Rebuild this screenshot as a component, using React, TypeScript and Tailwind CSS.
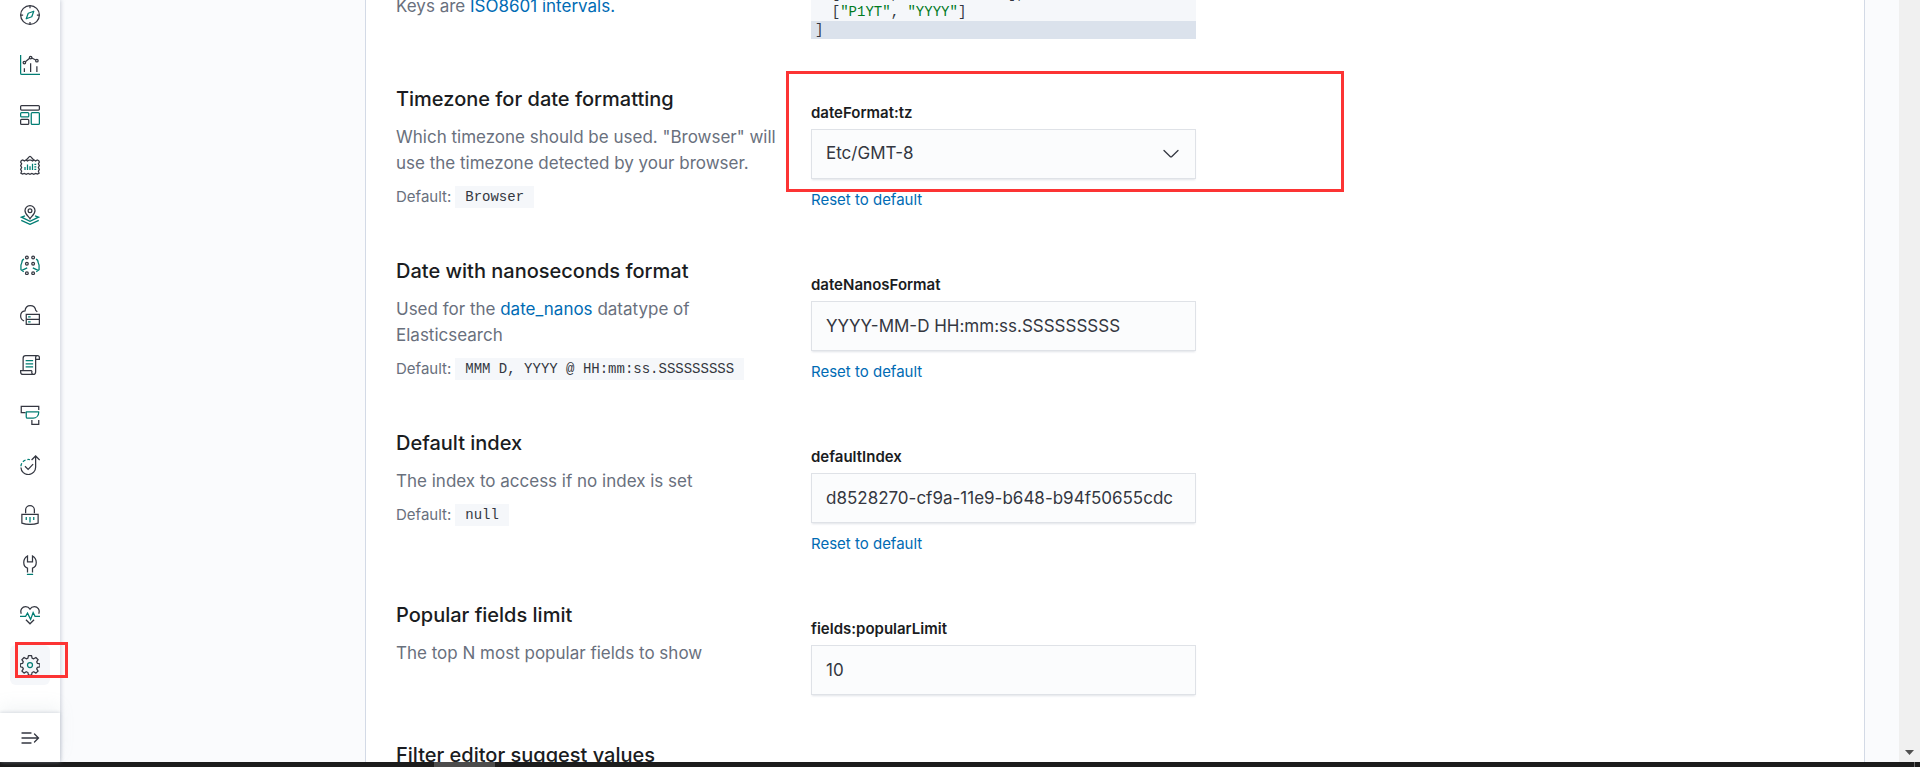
import type { ReactNode } from "react";

const DARK = "#343741";
const TEAL = "#017d73";

function Icon({ children }: { children: ReactNode }) {
  return (
    <svg viewBox="0 0 32 32" className="size-5" fill="none" stroke={DARK} strokeWidth="2" aria-hidden="true">
      {children}
    </svg>
  );
}

const navItems: { label: string; icon: ReactNode }[] = [
  {
    label: "Discover",
    icon: (
      <>
        <circle cx="16" cy="16" r="15" />
        <path d="M16 1v4M16 27v4M1 16h4M27 16h4" />
        <path stroke={TEAL} strokeLinejoin="round" d="M10 22l3.2-8.8L22 10l-3.2 8.8z" />
      </>
    ),
  },
  {
    label: "Visualize",
    icon: (
      <>
        <path stroke={TEAL} d="M1 0v29a2 2 0 0 0 2 2h29" />
        <path d="M7 21v6M17 13v14M27 18v9" />
        <circle cx="7" cy="12" r="2" />
        <circle cx="17" cy="4" r="2" />
        <circle cx="27" cy="9" r="2" />
        <path d="M8.6 10.7l6.8-5.4M18.8 4.9l6.4 3.2" />
      </>
    ),
  },
  {
    label: "Dashboard",
    icon: (
      <>
        <rect x="1" y="1" width="30" height="7" rx="1.5" />
        <rect x="1" y="12" width="13" height="7" rx="1.5" stroke={TEAL} />
        <rect x="18" y="12" width="13" height="19" rx="1.5" stroke={TEAL} />
        <rect x="1" y="23" width="13" height="8" rx="1.5" />
      </>
    ),
  },
  {
    label: "Canvas",
    icon: (
      <>
        <path d="M10 8l5-5.4a1.4 1.4 0 0 1 2 0L22 8" />
        <path d="M2 9l2.5-1 2.5 1.6L9.5 8 12 9.6 14.5 8h3L20 9.6 22.5 8 25 9.6 27.5 8 30 9l1 2.5-1.6 2.5L31 17l-1.6 3L31 23l-1.6 3 1.2 3-2.6 1.6L25 29.4l-3 1.4-3-1.4-3 1.4-3-1.4-3 1.4-3-1.4-3 1.2L1.4 29l1.2-3L1 23l1.6-3L1 17l1.6-3L1 11.5z" />
        <path stroke={TEAL} d="M8 19v5M12 15v9M16 18v6M20 14v10M23 15h3M23 19h3M23 23h3" />
      </>
    ),
  },
  {
    label: "Maps",
    icon: (
      <>
        <path d="M16 22c-2-3.6-8-7.5-8-13a8 8 0 0 1 16 0c0 5.5-6 9.4-8 13z" />
        <circle cx="16" cy="9" r="3" />
        <path stroke={TEAL} d="M8 17.500l-5.500 2L16 26l13.500-6.500-5.500-2M2 24.500L16 31l14-6.500" />
      </>
    ),
  },
  {
    label: "Machine Learning",
    icon: (
      <>
        <circle cx="11" cy="4" r="2.2" />
        <circle cx="21" cy="4" r="2.2" />
        <circle cx="11" cy="14" r="2.2" />
        <circle cx="21" cy="14" r="2.2" />
        <circle cx="11" cy="29" r="2.2" />
        <circle cx="21" cy="29" r="2.2" />
        <path stroke={TEAL} d="M6.500 6.500C4 7 3 9 3 12l-1.500 4v7.500L6 27M3 24.500l8.500-4M25.500 6.500C28 7 29 9 29 12l1.500 4v7.500L26 27M29 24.500l-8.500-4" />
      </>
    ),
  },
  {
    label: "Infrastructure",
    icon: (
      <>
        <path d="M6.500 25.500C3 24 1 21 1 17.500 1 13.500 4 10 8 9.500 8.500 4.500 12 1 16.500 1s8 3 8.800 7.800c1 .5 1.700 1.200 2.200 2.200" />
        <path d="M10 15h21v16H10zM10 23h21" />
        <path stroke={TEAL} d="M13 19h4M13 27h4" />
      </>
    ),
  },
  {
    label: "Logs",
    icon: (
      <>
        <path d="M5 24V5a4 4 0 0 1 4-4h19a3 3 0 0 1 3 3v3h-6V4a3 3 0 0 1 3-3M25 7v20" />
        <path d="M19 25H1v2a4 4 0 0 0 4 4h16a4 4 0 0 0 4-4M19 25v2a3 3 0 0 0 3 4" />
        <path stroke={TEAL} d="M9 9h12M9 14h12M9 19h12" />
      </>
    ),
  },
  {
    label: "APM",
    icon: (
      <>
        <path d="M9 12H2V2h28v6" />
        <path stroke={TEAL} strokeLinejoin="round" d="M10 11h20c0 6-4 10-9 10H12a2 2 0 0 1-2-2z" />
        <path d="M19 24v7h11v-7" />
      </>
    ),
  },
  {
    label: "Uptime",
    icon: (
      <>
        <path d="M1.500 20a11.500 11.500 0 0 0 23.500-1V2M18.500 8L25 1.500 31.500 8" />
        <path d="M8 18l5 5 8-8.500" />
        <path stroke={TEAL} strokeDasharray="5 3" d="M1.500 18A11.500 11.500 0 0 1 16 7.600" />
      </>
    ),
  },
  {
    label: "SIEM",
    icon: (
      <>
        <path d="M9 13V8a7 7 0 0 1 14 0v5" />
        <path d="M3 15h26v14c-8 2.500-18 2.500-26 0z" />
        <path stroke={TEAL} d="M10 19v5M16 19v9M22 19v5" />
      </>
    ),
  },
  {
    label: "Dev Tools",
    icon: (
      <>
        <path d="M12 28v-7c-4-1.500-6-5-6-9 0-4.500 2.500-8.500 6-10.500V11h8V1.500c3.500 2 6 6 6 10.500 0 4-2 7.500-6 9v7" />
        <path stroke={TEAL} d="M11 31h10" />
      </>
    ),
  },
  {
    label: "Stack Monitoring",
    icon: (
      <>
        <path d="M2 14C-.5 7 4 2.500 9 2.500c3 0 5.500 1.500 7 4 1.500-2.500 4-4 7-4 5 0 9.500 4.500 7 11.500M9.500 23.500L16 30l6.500-6.500" />
        <path stroke={TEAL} d="M0 18h9l3-5 5 10 4-11 3 6h8" />
      </>
    ),
  },
  {
    label: "Management",
    icon: (
      <>
        <path strokeLinejoin="round" d="M13.500 1h5l.8 4 2.600 1.100L25.400 4 29 7.500l-2.300 3.400 1.200 2.600 4 .7v4.600l-4 .9-1.200 2.500 2.300 3.500-3.500 3.300-3.500-2.200-2.700 1.200-.8 4h-5l-.8-4L10 26.800 6.500 29 3 25.700l2.300-3.500-1.200-2.500-3.600-.9v-4.600l3.600-.7 1.200-2.600L3 7.500 6.500 4l3.500 2.100L12.700 5z" />
        <circle cx="16" cy="16" r="4" stroke={TEAL} />
      </>
    ),
  },
];

function Sidebar() {
  return (
    <aside className="relative z-10 flex w-[60px] shrink-0 flex-col bg-white shadow-[1px_0_4px_rgba(152,162,179,0.45)]">
      <nav aria-label="Main" className="-mt-[5px] flex flex-1 flex-col items-center gap-[10px]">
        {navItems.map((item) => {
          const current = item.label === "Management";
          return (
            <a
              key={item.label}
              href="#"
              aria-label={item.label}
              aria-current={current ? "page" : undefined}
              className={`relative flex size-10 shrink-0 items-center justify-center rounded-md ${current ? "bg-[#f5f7fa]" : ""}`}
            >
              <Icon>{item.icon}</Icon>
              {current && (
                <span className="pointer-events-none absolute -top-[3px] left-[5px] h-9 w-[53px] border-[3px] border-[#fc3434]" />
              )}
            </a>
          );
        })}
      </nav>
      <button
        type="button"
        aria-label="Expand navigation"
        className="flex h-[49px] shrink-0 items-center justify-center bg-white shadow-[0_-1px_3px_rgba(152,162,179,0.3),0_-8px_16px_rgba(152,162,179,0.1)]"
      >
        <svg viewBox="0 0 20 20" className="size-5" fill="none" stroke={DARK} strokeWidth="1.3" strokeLinecap="round" aria-hidden="true">
          <path d="M2 5h9M2 10h16M2 15h9M14.500 6l4 4-4 4" />
        </svg>
      </button>
    </aside>
  );
}

function Description({ children }: { children: ReactNode }) {
  return <p className="text-[17px] leading-[26px] text-[#69707d]">{children}</p>;
}

function DocLink({ children }: { children: ReactNode }) {
  return (
    <a href="#" className="text-[#006bb4]">
      {children}
    </a>
  );
}

type SettingProps = {
  title: string;
  name: string;
  value: string;
  description: ReactNode;
  defaultValue?: string;
  options?: string[];
  resettable?: boolean;
  highlighted?: boolean;
};

const fieldClass =
  "block h-[50px] w-full appearance-none border border-[#dfe2e7] bg-[#fbfcfd] px-[14px] text-[17px] text-[#343741] shadow-[0_2px_2px_-1px_rgba(152,162,179,0.3)] outline-none";

function Setting({ title, name, value, description, defaultValue, options, resettable, highlighted }: SettingProps) {
  return (
    <section className="relative grid grid-cols-[390px_385px] gap-x-[25px]">
      <div className="flex flex-col gap-[10px]">
        <h3 className="text-[20px] leading-[30px] font-medium text-[#1a1c21]">{title}</h3>
        <Description>{description}</Description>
        {defaultValue && (
          <p className="flex items-center gap-1 text-[15px] leading-[22px] text-[#69707d]">
            Default:
            <code className="bg-[#f5f7fa] px-[10px] font-['Liberation_Mono',monospace] text-[14px] text-[#343741]">
              {defaultValue}
            </code>
          </p>
        )}
      </div>
      <div className="flex flex-col items-start pt-[18px]">
        <label htmlFor={name} className="text-[15px] leading-[22px] font-semibold text-[#1a1c21]">
          {name}
        </label>
        <div className="relative mt-[5px] w-full">
          {options ? (
            <>
              <select id={name} defaultValue={value} className={fieldClass}>
                {options.map((option) => (
                  <option key={option}>{option}</option>
                ))}
              </select>
              <svg viewBox="0 0 20 20" className="pointer-events-none absolute top-[15px] right-[15px] size-5" fill="none" stroke={DARK} strokeWidth="1.3" strokeLinecap="round" strokeLinejoin="round" aria-hidden="true">
                <path d="M3 6.500l6.400 6.200a.8.8 0 0 0 1.200 0L17 6.500" />
              </svg>
            </>
          ) : (
            <input id={name} type="text" defaultValue={value} className={fieldClass} />
          )}
        </div>
        {resettable && (
          <button type="button" className="mt-[10px] text-[15px] leading-[22px] text-[#006bb4]">
            Reset to default
          </button>
        )}
      </div>
      {highlighted && (
        <span className="pointer-events-none absolute -top-[13px] left-[390px] h-[121px] w-[558px] border-[3px] border-[#fc3434]" />
      )}
    </section>
  );
}

function ScaledFormatSetting() {
  return (
    <section className="-mt-[15px] grid grid-cols-[390px_385px] gap-x-[25px]">
      <div className="pt-2">
        <Description>
          Keys are <DocLink>ISO8601 intervals.</DocLink>
        </Description>
      </div>
      <pre className="bg-[#f5f7fa] font-['Liberation_Mono',monospace] text-[14px] leading-[18px] text-[#343741]">
        <code className="block px-1">
          {"  ["}
          <span className="text-[#007a1f]">"P1DT"</span>, <span className="text-[#007a1f]">"YYYY-MM-DD"</span>],
        </code>
        <code className="block px-1">
          {"  ["}
          <span className="text-[#007a1f]">"P1YT"</span>, <span className="text-[#007a1f]">"YYYY"</span>]
        </code>
        <code className="block bg-[#dbe2ec] px-1">]</code>
      </pre>
    </section>
  );
}

export default function App() {
  return (
    <div className="flex h-screen flex-col overflow-hidden bg-[#fafbfd] font-['Inter','Liberation_Sans',sans-serif]">
      <div className="flex min-h-0 flex-1">
        <Sidebar />
        <main className="mr-[34px] ml-[305px] min-w-0 flex-1 overflow-hidden border-x border-[#d3dae6] bg-white px-[30px]">
          <div className="flex flex-col gap-[45px]">
            <ScaledFormatSetting />
            <Setting
              title="Timezone for date formatting"
              name="dateFormat:tz"
              value="Etc/GMT-8"
              options={["Browser", "Etc/GMT-8"]}
              description={'Which timezone should be used. "Browser" will use the timezone detected by your browser.'}
              defaultValue="Browser"
              resettable
              highlighted
            />
            <Setting
              title="Date with nanoseconds format"
              name="dateNanosFormat"
              value="YYYY-MM-D HH:mm:ss.SSSSSSSSS"
              description={
                <>
                  Used for the <DocLink>date_nanos</DocLink> datatype of Elasticsearch
                </>
              }
              defaultValue="MMM D, YYYY @ HH:mm:ss.SSSSSSSSS"
              resettable
            />
            <Setting
              title="Default index"
              name="defaultIndex"
              value="d8528270-cf9a-11e9-b648-b94f50655cdc"
              description="The index to access if no index is set"
              defaultValue="null"
              resettable
            />
            <Setting
              title="Popular fields limit"
              name="fields:popularLimit"
              value="10"
              description="The top N most popular fields to show"
            />
            <h3 className="text-[20px] leading-[30px] font-medium text-[#1a1c21]">Filter editor suggest values</h3>
          </div>
        </main>
        <div className="flex w-[21px] shrink-0 flex-col items-center justify-end bg-[#f0f0f0] pb-[7px]">
          <svg viewBox="0 0 9 5" className="h-[5px] w-[9px]" aria-hidden="true">
            <path d="M0 0h9L4.500 5z" fill="#505050" />
          </svg>
        </div>
      </div>
      <footer className="flex h-[5px] shrink-0 justify-between bg-[#1c1c1c] pr-[5px] pl-[434px]">
        <span className="w-[61px] bg-[#4c4c4c]" />
        <span className="w-px bg-[#6b6b6b]" />
      </footer>
    </div>
  );
}
